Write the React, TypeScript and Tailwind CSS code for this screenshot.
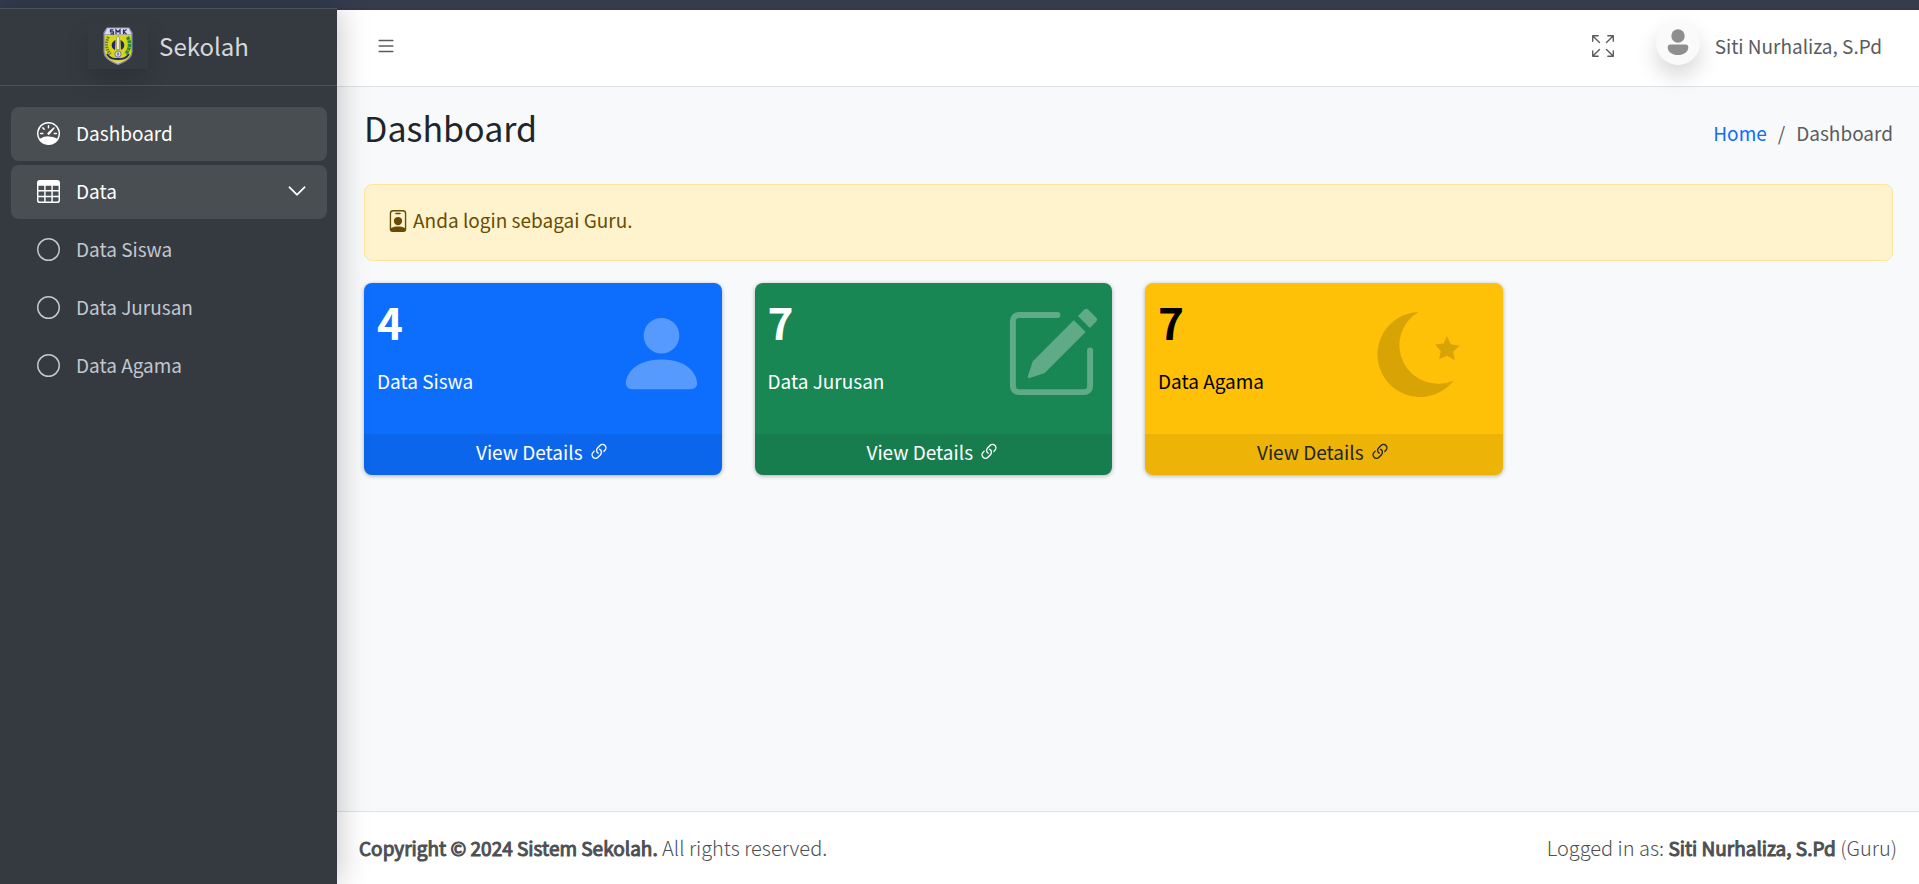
import React from "react";
import {
  BsSpeedometer,
  BsTable,
  BsCircle,
  BsChevronDown,
  BsList,
  BsArrowsFullscreen,
  BsPersonBadge,
  BsPersonFill,
  BsPencilSquare,
  BsLink45Deg,
} from "react-icons/bs";

function SchoolCrest() {
  return (
    <svg viewBox="0 0 30 38" className="h-[38px] w-[30px]" aria-hidden="true">
      <path d="M4 1h22l3 5v19c0 6-7 10-14 12.500C8 35 1 31 1 25V6z" fill="#d8d619" stroke="#8084b4" strokeWidth="1.200" />
      <path d="M4 1h22l3 6.500H1z" fill="#dcdce8" stroke="#8286b8" strokeWidth=".6" />
      <path d="M10.500 2.800H7.500v2h3v2h-3M13 7V2.800l2 2.200 2-2.200V7M20.500 2.500V7M23.500 2.500l-3 2.300L23.500 7" fill="none" stroke="#23276f" strokeWidth="1.200" />
      <path d="M5.500 10c-3 5-3 12 2 17" fill="none" stroke="#6d7434" strokeWidth="3" strokeDasharray="1.500 1" />
      <path d="M24.500 10c3 5 3 12-2 17" fill="none" stroke="#2c8a3c" strokeWidth="3.500" strokeDasharray="3 .6" />
      <path d="M12.500 13c-5 2-5 8-.5 10zM17.500 13c5 2 5 8 .5 10z" fill="#23276f" />
      <path d="M13.500 11l1.500-2.500 1.500 2.500v11.500h-3z" fill="#e7e7ea" stroke="#77772c" strokeWidth=".5" />
      <circle cx="15" cy="27" r="3.200" fill="#d4d6df" stroke="#5a5e80" strokeWidth=".8" />
      <path d="M14.300 25.500h1.500v3h-1.500z" fill="#666a88" />
      <path d="M4 27c3 5 7 5 11 5s8 0 11-5" fill="none" stroke="#23276f" strokeWidth="1.800" />
      <path d="M9 33.500c4 1.200 8 1.200 12 0l-6 3.300z" fill="#c9cbd8" />
    </svg>
  );
}

function CrescentStar({ className }: { className: string }) {
  return (
    <svg viewBox="740 126 248 256" className={className} fill="currentColor" aria-hidden="true">
      <path d="M864 126A128 128 0 1 0 970 332A116 116 0 0 1 864 126z" />
      <path d="M949 198l12 25 27 5-20 18 6 25-24-13-24 10 5-24-17-20 26-3z" />
    </svg>
  );
}

function Avatar() {
  return (
    <span className="mb-1.5 flex size-11 justify-center rounded-full bg-[#fafafa] pt-2 shadow-[0_11px_22px_rgba(0,0,0,0.16)]">
      <svg viewBox="0 0 22 26" className="h-[26px] w-[22px]" fill="#8e8e8e" aria-hidden="true">
        <circle cx="11" cy="7" r="6.700" />
        <path d="M3.500 15.500h15c1.800 0 2.800 1.200 2.800 2.700 0 4.800-4.600 7.800-10.300 7.800S.7 23 .7 18.200c0-1.500 1-2.700 2.800-2.700z" />
      </svg>
    </span>
  );
}

const subItems = ["Data Siswa", "Data Jurusan", "Data Agama"];

function Sidebar() {
  return (
    <aside className="relative z-10 flex w-[337px] shrink-0 flex-col bg-[#343a40] shadow-[0_0_30px_rgba(0,0,0,0.25)]">
      <a href="#" className="flex h-[78px] items-center justify-center gap-[11px] border-y border-[#4b545c] pb-0.5 text-[24px] text-[#d6d8d9]">
        <span className="flex h-[45px] w-[60px] items-center justify-center shadow-[0_11px_22px_rgba(0,0,0,0.15)]">
          <SchoolCrest />
        </span>
        Sekolah
      </a>
      <nav className="pt-[21px] pr-2.5 pl-[11px] leading-[30px]">
        <ul className="flex flex-col gap-1">
          <li>
            <a href="#" className="flex h-[54px] items-center gap-4 rounded-lg bg-[#494e52] pb-0.5 pl-[26px] text-white">
              <BsSpeedometer className="size-[23px]" />
              Dashboard
            </a>
          </li>
          <li>
            <button type="button" className="flex h-[54px] w-full items-center gap-4 rounded-lg bg-[#494e52] pr-5 pb-0.5 pl-[26px] text-white">
              <BsTable className="size-[23px]" />
              Data
              <BsChevronDown className="ml-auto size-5" strokeWidth={0.5} />
            </button>
          </li>
          {subItems.map((label) => (
            <li key={label}>
              <a href="#" className="flex h-[54px] items-center gap-4 rounded-lg pb-0.5 pl-[26px] text-[#c2c7d0]">
                <BsCircle className="size-[23px]" />
                {label}
              </a>
            </li>
          ))}
        </ul>
      </nav>
    </aside>
  );
}

type CardProps = {
  count: number;
  label: string;
  tone: string;
  linkTone: string;
  icon: React.ReactNode;
};

function StatCard({ count, label, tone, linkTone, icon }: CardProps) {
  return (
    <section className={`flex flex-col overflow-hidden rounded-lg shadow-[0_1px_4px_rgba(0,0,0,0.3)] ${tone}`}>
      <div className="flex h-[151px] justify-between pl-[13px]">
        <div>
          <h3 className="pt-2 text-[44px] leading-[60px] font-bold">{count}</h3>
          <p className="pt-[15px] leading-[30px]">{label}</p>
        </div>
        {icon}
      </div>
      <a href="#" className={`flex h-[41px] items-center justify-center gap-[5px] bg-black/[0.07] pb-1 ${linkTone}`}>
        View Details
        <BsLink45Deg className="mb-0.5 size-[22px]" />
      </a>
    </section>
  );
}

export default function App() {
  return (
    <div className="flex min-h-screen flex-col bg-[#f8f9fa] font-['Noto_Sans_CJK_SC','Open_Sans',sans-serif] text-[19px] text-[#212529]">
      <div className="h-2 bg-[#343c4e]" />
      <div className="flex grow">
        <Sidebar />
        <div className="flex min-w-0 grow flex-col">
          <header className="flex h-[79px] items-center border-t-2 border-b border-t-[#343a40] border-b-[#dee2e6] bg-white pr-[37px] pb-1 pl-[38px] text-[#595c5f]">
            <button type="button" aria-label="Toggle sidebar">
              <BsList className="size-[22px]" />
            </button>
            <button type="button" aria-label="Fullscreen" className="ml-auto">
              <BsArrowsFullscreen className="size-[22px]" />
            </button>
            <a href="#" className="ml-[42px] flex items-center gap-[15px]">
              <Avatar />
              Siti Nurhaliza, S.Pd
            </a>
          </header>
          <main className="grow pr-[26px] pl-[27px]">
            <div className="flex h-[97px] items-start justify-between pt-[18px]">
              <h1 className="text-[34px] leading-[46px]">Dashboard</h1>
              <nav aria-label="Breadcrumb" className="pt-[13px] leading-[30px]">
                <ol className="flex gap-[11px] text-[#595c5f]">
                  <li>
                    <a href="#" className="text-[#0d6efd]">Home</a>
                  </li>
                  <li aria-hidden="true">/</li>
                  <li aria-current="page">Dashboard</li>
                </ol>
              </nav>
            </div>
            <div role="alert" className="flex h-[77px] items-center gap-1 rounded-lg border border-[#ffe69c] bg-[#fff3cd] px-[22px] pb-1 text-[#664d03]">
              <BsPersonBadge className="size-[22px]" />
              Anda login sebagai Guru.
            </div>
            <div className="mt-[22px] grid grid-cols-4 gap-[33px]">
              <StatCard
                count={4}
                label="Data Siswa"
                tone="bg-[#0d6efd] text-white"
                linkTone="text-white"
                icon={<BsPersonFill className="mt-[23px] mr-[13px] size-[95px] opacity-30" />}
              />
              <StatCard
                count={7}
                label="Data Jurusan"
                tone="bg-[#198754] text-white"
                linkTone="text-white"
                icon={<BsPencilSquare className="mt-[23px] mr-[13px] size-[95px] opacity-30" />}
              />
              <StatCard
                count={7}
                label="Data Agama"
                tone="bg-[#ffc107] text-black"
                linkTone="text-[#212529]"
                icon={<CrescentStar className="mt-[29px] mr-[43px] h-[85px] w-[83px] opacity-15" />}
              />
            </div>
          </main>
          <footer className="flex h-[73px] items-center justify-between border-t border-[#dee2e6] bg-white px-[22px] text-[20px] font-light text-[#4d5053]">
            <p>
              <strong className="text-[19px] font-normal [-webkit-text-stroke:1px]">Copyright © 2024 Sistem Sekolah.</strong> All rights reserved.
            </p>
            <p>
              Logged in as: <strong className="text-[19px] font-normal [-webkit-text-stroke:1px]">Siti Nurhaliza, S.Pd</strong> (Guru)
            </p>
          </footer>
        </div>
      </div>
    </div>
  );
}
